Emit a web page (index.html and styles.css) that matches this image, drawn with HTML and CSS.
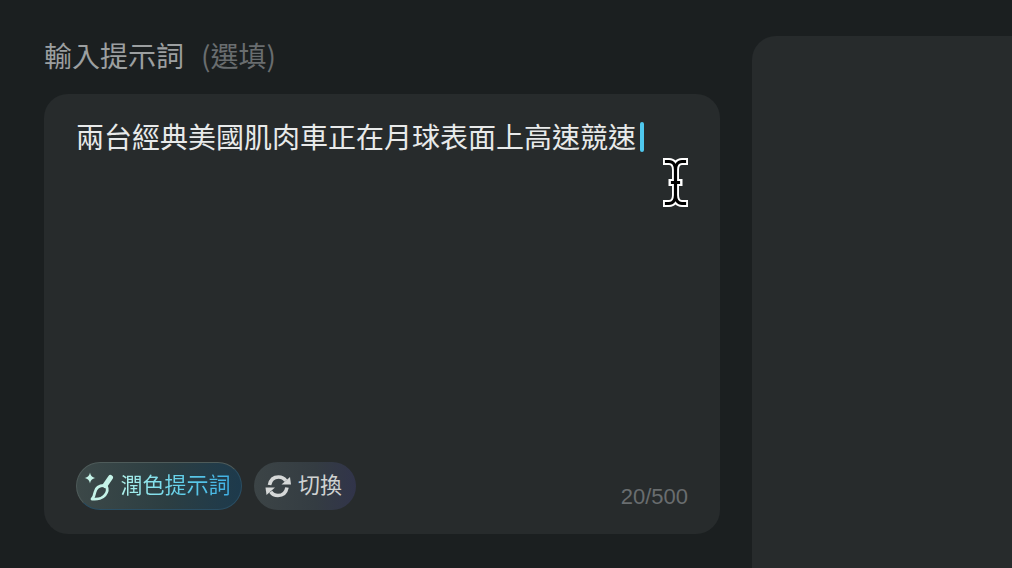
FILE: index.html
```html
<!DOCTYPE html>
<html lang="zh-Hant">
<head>
<meta charset="utf-8">
<title>輸入提示詞</title>
<link rel="stylesheet" href="styles.css">
</head>
<body>
<main class="page">
  <section class="left">
    <h2 class="label">輸入提示詞<span class="optional">(選填)</span></h2>
    <div class="card">
      <div class="prompt"><span>兩台經典美國肌肉車正在月球表面上高速競速</span><i class="caret"></i></div>
      <svg class="ibeam" width="25" height="49" viewBox="0 0 25 49" aria-hidden="true">
        <path class="ibeam-o" d="M3.500 3.500H6C10 3.500 12.500 7 12.500 12C12.500 7 15 3.500 19 3.500H21.500M12.500 12V37M3.500 45.500H6C10 45.500 12.500 42 12.500 37C12.500 42 15 45.500 19 45.500H21.500M9 24.500H16"/>
        <path class="ibeam-i" d="M3.500 3.500H6C10 3.500 12.500 7 12.500 12C12.500 7 15 3.500 19 3.500H21.500M12.500 12V37M3.500 45.500H6C10 45.500 12.500 42 12.500 37C12.500 42 15 45.500 19 45.500H21.500M9.500 24.500H15.500"/>
      </svg>
      <div class="footer">
        <div class="chips">
          <button class="chip polish">
            <svg class="icon" width="30" height="30" viewBox="0 0 30 30" aria-hidden="true">
              <path class="spark" d="M6 1.500C6.800 5 8 6.200 11.500 7 8 7.800 6.800 9 6 12.500 5.200 9 4 7.800.5 7 4 6.200 5.200 5 6 1.500z"/>
              <path class="handle" d="M26.500 6.500 21 14.500"/>
              <path class="brush-line" d="M20 14.500C14.500 14.500 11.800 17.500 11 21 10.500 23.800 10 26 8 28 13.500 28.800 18.800 27 21 24.200 23.300 21.300 23.800 18 22.500 15.500z"/>
            </svg>
            <span>潤色提示詞</span>
          </button>
          <button class="chip swap">
            <svg class="icon" width="26" height="26" viewBox="0 0 26 26" aria-hidden="true">
              <path class="arc" d="M3.500 12C4.500 6.800 8 4 12.500 4 15.500 4 18.200 5.300 19.800 7.800"/>
              <path class="head" d="M15.500 11.500H25L24 4z"/>
              <path class="arc" d="M21 14.500C20 19.700 16.500 22.500 12 22.500 9 22.500 6.300 21.200 4.700 18.700"/>
              <path class="head" d="M9 14.500H-.5L.5 22z"/>
            </svg>
            <span>切換</span>
          </button>
        </div>
        <div class="count">20/500</div>
      </div>
    </div>
  </section>
  <aside class="right"></aside>
</main>
</body>
</html>
```
FILE: styles.css
```css
* { box-sizing: border-box; }
html, body { margin: 0; height: 100%; overflow: hidden; }
body {
  background: #1b1f20;
  font-family: "Liberation Sans", "Noto Sans CJK TC", sans-serif;
}
.page {
  display: grid;
  grid-template-columns: 676px 1fr;
  column-gap: 32px;
  width: 1012px;
  height: 568px;
  padding: 36px 0 0 44px;
  overflow: hidden;
}
.left { display: flex; flex-direction: column; }
.label {
  margin: 0 0 20px;
  height: 38px;
  line-height: 38px;
  font-size: 28px;
  font-weight: 400;
  color: #9c9fa0;
  font-family: "Noto Sans CJK TC", sans-serif;
}
.optional { margin-left: 17px; color: #696d6f; }
.card {
  position: relative;
  height: 440px;
  background: #272b2c;
  border-radius: 24px;
  padding: 21px 32px 24px 33px;
  display: flex;
  flex-direction: column;
  justify-content: space-between;
}
.prompt {
  display: flex;
  align-items: center;
  height: 42px;
  margin-left: -1px;
  font-size: 28px;
  line-height: 42px;
  color: #e8eaea;
  font-family: "Noto Sans CJK TC", sans-serif;
}
.caret {
  width: 4px;
  height: 30px;
  margin: 1px 0 0 4px;
  border-radius: 2px;
  background: #4fc8ee;
}
.ibeam { position: absolute; left: 619px; top: 64px; }
.ibeam-o, .ibeam-i { fill: none; stroke-linecap: square; }
.ibeam-o { stroke: #fff; stroke-width: 7; }
.ibeam-i { stroke: #000; stroke-width: 3.200; }
.footer {
  display: flex;
  justify-content: space-between;
  align-items: flex-end;
  margin-left: -1px;
}
.chips { display: flex; gap: 12px; }
.chip {
  display: flex;
  align-items: center;
  height: 48px;
  border-radius: 24px;
  font-size: 22px;
  font-family: "Noto Sans CJK TC", sans-serif;
  padding: 0;
}
.chip span { line-height: 30px; margin-top: -6px; }
.polish {
  width: 166px;
  padding-left: 6.500px;
  gap: 7px;
  border: 1.500px solid;
  background: linear-gradient(90deg, #3c4848 0%, #2c3e42 55%, #1d3a4c 100%);
  border-color: #4e5b5a #2a4e63 #2a4e63 #4e5b5a;
}
.polish span {
  background: linear-gradient(90deg, #b0f2ec, #62d0ea 55%, #3fb0e6);
  -webkit-background-clip: text;
  background-clip: text;
  color: transparent;
}
.swap {
  width: 102px;
  padding-left: 12px;
  gap: 6px;
  border: 0;
  color: #cfd2d2;
  background: linear-gradient(90deg, #3c4446 0%, #343c42 60%, #31344a 100%);
}
.icon { flex: none; overflow: visible; }
.spark { fill: #c5f3e8; }
.handle { fill: none; stroke: #c5f3e8; stroke-width: 5; stroke-linecap: round; }
.brush-line { fill: none; stroke: #c5f3e8; stroke-width: 2.800; stroke-linejoin: round; }
.arc { fill: none; stroke: #d6d8d8; stroke-width: 3.600; }
.head { fill: #d6d8d8; }
.count {
  font-size: 22px;
  line-height: 26px;
  color: #696d6f;
}
.right {
  background: #272b2c;
  border-radius: 24px 0 0 0;
  height: 600px;
}
```
